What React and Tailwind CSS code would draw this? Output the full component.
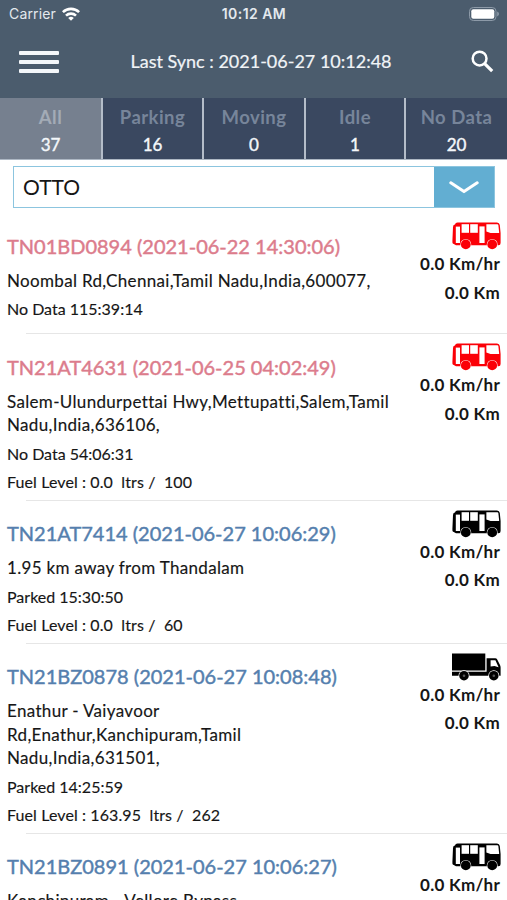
import React, { useState } from 'react';

const tabs = [
    { label: 'All', count: 37 },
    { label: 'Parking', count: 16 },
    { label: 'Moving', count: 0 },
    { label: 'Idle', count: 1 },
    { label: 'No Data', count: 20 },
];

const vehicles = [
    {
        id: 'TN01BD0894',
        time: '2021-06-22 14:30:06',
        address: ['Noombal Rd,Chennai,Tamil Nadu,India,600077,'],
        status: 'No Data 115:39:14',
        icon: 'bus',
        offline: true,
    },
    {
        id: 'TN21AT4631',
        time: '2021-06-25 04:02:49',
        address: ['Salem-Ulundurpettai Hwy,Mettupatti,Salem,Tamil', 'Nadu,India,636106,'],
        status: 'No Data 54:06:31',
        fuel: 'Fuel Level : 0.0  ltrs /  100',
        icon: 'bus',
        offline: true,
    },
    {
        id: 'TN21AT7414',
        time: '2021-06-27 10:06:29',
        address: ['1.95 km away from Thandalam'],
        status: 'Parked 15:30:50',
        fuel: 'Fuel Level : 0.0  ltrs /  60',
        icon: 'bus',
    },
    {
        id: 'TN21BZ0878',
        time: '2021-06-27 10:08:48',
        address: ['Enathur - Vaiyavoor', 'Rd,Enathur,Kanchipuram,Tamil', 'Nadu,India,631501,'],
        status: 'Parked 14:25:59',
        fuel: 'Fuel Level : 163.95  ltrs /  262',
        icon: 'truck',
    },
    {
        id: 'TN21BZ0891',
        time: '2021-06-27 10:06:27',
        address: ['Kanchipuram - Vellore Bypass'],
        icon: 'bus',
    },
];

const BusIcon = ({ className }) => (
    <svg viewBox="0 0 49 28" className={className}>
        <path fill="currentColor" d="M3 2.6 Q3.4 .4 5.5 .4 H45 Q47.4 .4 47.8 3 L48.6 11 V21 Q48.6 23.2 46.5 23.2 H4 L.8 21.5 Q.3 21.2 .4 19 L1 5 Q1.2 2.6 3 2.6Z" />
        <g fill="#fff">
            <path d="M3.8 4.6 H8 V21 H3.8Z" />
            <path d="M9.6 2.2 H17 V10.8 H9.6Z" />
            <path d="M18.2 2.2 H25.8 V10.8 H18.2Z" />
            <path d="M27.4 4.4 H32.6 V21 H27.4Z" />
            <path d="M34.4 2.2 H45.4 Q46.2 2.2 46.4 3.5 L47.2 11 H38.5 L34.4 9.6Z" />
        </g>
        <circle cx="13.8" cy="22.4" r="5.4" fill="#fff" />
        <circle cx="40.2" cy="22.4" r="5.4" fill="#fff" />
        <circle cx="13.8" cy="22.4" r="4.9" fill="currentColor" />
        <circle cx="40.2" cy="22.4" r="4.9" fill="currentColor" />
    </svg>
);

const TruckIcon = ({ className }) => (
    <svg viewBox="0 0 49 28" className={className}>
        <path fill="currentColor" d="M0 .5 H33.3 V17.6 H0Z M0 18.8 H34.6 V5.2 H43.2 Q44.6 5.2 45.2 6.5 L48 12 Q48.6 13 48.6 14.5 V22.8 H0Z" />
        <path fill="#fff" d="M38.6 7.2 H43.4 L46.6 14.2 L42.5 13 L38.6 13.6Z" />
        <circle cx="12" cy="22.7" r="5.5" fill="#fff" />
        <circle cx="41.8" cy="22.7" r="5.5" fill="#fff" />
        <circle cx="12" cy="22.7" r="4.8" fill="currentColor" />
        <circle cx="41.8" cy="22.7" r="4.8" fill="currentColor" />
        <circle cx="12" cy="22.7" r="1.3" fill="#555" />
        <circle cx="41.8" cy="22.7" r="1.3" fill="#555" />
    </svg>
);

const StatusBar = () => (
    <div className="grid h-[27px] grid-cols-3 items-center pl-[9px] pr-2 font-['Inter'] text-[14px] text-[#e4e9ee]">
        <div className="flex items-center gap-[6px]">
            <span className="tracking-[0.15px]">Carrier</span>
            <svg viewBox="0 0 18 14" className="h-[14px] w-[18px]" fill="none" stroke="#fff" strokeWidth="2.6">
                <path d="M.9 5.2 A11.5 11.5 0 0 1 17.1 5.2" />
                <path d="M4 8.6 A7.2 7.2 0 0 1 14 8.6" />
                <path d="M9 13.8 L6.2 11 A4 4 0 0 1 11.8 11Z" fill="#fff" stroke="none" />
            </svg>
        </div>
        <span className="whitespace-nowrap text-center font-semibold tracking-[0.45px]">10:12 AM</span>
        <svg viewBox="0 0 30 14" className="h-[14px] w-[30px] justify-self-end">
            <rect x=".5" y=".5" width="26.5" height="13" rx="3.8" fill="none" stroke="#8d9aa8" />
            <rect x="2.3" y="2.3" width="23" height="9.4" rx="2" fill="#fff" />
            <path d="M28.2 4.6 Q30 5.5 30 7 Q30 8.5 28.2 9.4Z" fill="#8d9aa8" />
        </svg>
    </div>
);

const Header = () => (
    <header className="h-[98px] bg-[#4b5c6d]">
        <StatusBar />
        <div className="flex h-[69px] items-center justify-between pl-[19px] pr-[13px]">
            <button className="flex w-10 flex-col gap-[5px]" aria-label="Menu">
                <span className="h-1 rounded-[1px] bg-[#f4f7fa]"></span>
                <span className="h-1 rounded-[1px] bg-[#f4f7fa]"></span>
                <span className="h-1 rounded-[1px] bg-[#f4f7fa]"></span>
            </button>
            <h1 className="whitespace-nowrap pr-[8px] text-[18px] text-[#f1f4f7] [-webkit-text-stroke:0.2px]">Last Sync : 2021-06-27 10:12:48</h1>
            <svg viewBox="0 0 23 23" className="h-[23px] w-[23px]" fill="none" stroke="#fff">
                <circle cx="8.6" cy="8.6" r="6.9" strokeWidth="2.5" />
                <path d="M13.6 13.6 L21.2 21.2" strokeWidth="3.2" />
            </svg>
        </div>
    </header>
);

const VehicleRow = ({ vehicle, first }) => {
    const Icon = vehicle.icon === 'truck' ? TruckIcon : BusIcon;

    return (
        <li>
            <div className={`ml-[26px] h-px ${first ? 'bg-white' : 'bg-[#e6e6e6]'}`}></div>
            <div className={`flex justify-between pl-[7px] pr-[7px] ${vehicle.fuel ? 'pb-[3.1px]' : 'pb-[10px]'}`}>
                <div className="pt-[18.5px] text-[#161616] [-webkit-text-stroke:0.15px]">
                    <h2 className={`h-[37px] whitespace-nowrap text-[20px] leading-7 [-webkit-text-stroke:0.45px] ${vehicle.offline ? 'text-[#dc7c8c]' : 'text-[#557fae]'}`}>
                        {vehicle.id} ({vehicle.time})
                    </h2>
                    <div className="pb-[3px] text-[17px] leading-[23.4px] tracking-[0.33px]">
                        {vehicle.address.map((line) => (
                            <p key={line} className="whitespace-nowrap">{line}</p>
                        ))}
                    </div>
                    {vehicle.status && <p className="text-[16px] leading-[28.5px]">{vehicle.status}</p>}
                    {vehicle.fuel && <p className="whitespace-pre text-[16px] leading-[28.5px] tracking-[0.1px]">{vehicle.fuel}</p>}
                </div>
                <div className="flex flex-col items-end whitespace-nowrap pt-[9px] text-[17px] font-bold leading-[28.5px] tracking-[0.25px] text-[#161616]">
                    <Icon className={`-mr-px h-[28px] w-[49px] ${vehicle.offline ? 'text-[#fb0007]' : 'text-black'}`} />
                    <span>0.0 Km/hr</span>
                    <span>0.0 Km</span>
                </div>
            </div>
        </li>
    );
};

const App = () => {
    const [active, setActive] = useState('All');

    return (
        <div className="h-[900px] w-[507px] overflow-hidden bg-white font-['Lato',sans-serif]">
            <Header />
            <nav className="grid h-[62px] grid-cols-[103px_101px_102px_100px_1fr] border-b-2 border-[#aeb8c4]">
                {tabs.map((tab) => (
                    <button
                        key={tab.label}
                        onClick={() => setActive(tab.label)}
                        className={`flex flex-col items-center border-r-2 border-[#b4bdc9] pt-[5px] last:border-r-0 ${active === tab.label ? 'bg-[#76808f]' : 'bg-[#3a4860]'}`}
                    >
                        <span className={`text-[18.5px] font-bold leading-7 tracking-[0.45px] ${active === tab.label ? 'text-[#a3abb6]' : 'text-[#77859a]'}`}>{tab.label}</span>
                        <span className="text-[17px] leading-7 text-[#f4f7fa] [-webkit-text-stroke:0.4px]">{tab.count}</span>
                    </button>
                ))}
            </nav>
            <div className="ml-[13px] mt-[6px] flex h-[42px] w-[482px] border border-[#8cc5df]">
                <div className="flex flex-1 items-center pl-[9px] text-[21px] text-[#161616]">OTTO</div>
                <button className="flex w-[60px] items-center justify-center bg-[#62aed2]" aria-label="Select group">
                    <svg viewBox="0 0 30 13" className="h-[13px] w-[30px]" fill="none" stroke="#fff" strokeWidth="3" strokeLinecap="round" strokeLinejoin="round">
                        <path d="M1.8 1.8 L15 10.6 L28.2 1.8" />
                    </svg>
                </button>
            </div>
            <ul className="mt-[4px]">
                {vehicles.map((vehicle, index) => (
                    <VehicleRow key={vehicle.id} vehicle={vehicle} first={index === 0} />
                ))}
            </ul>
        </div>
    );
};

export default App;
